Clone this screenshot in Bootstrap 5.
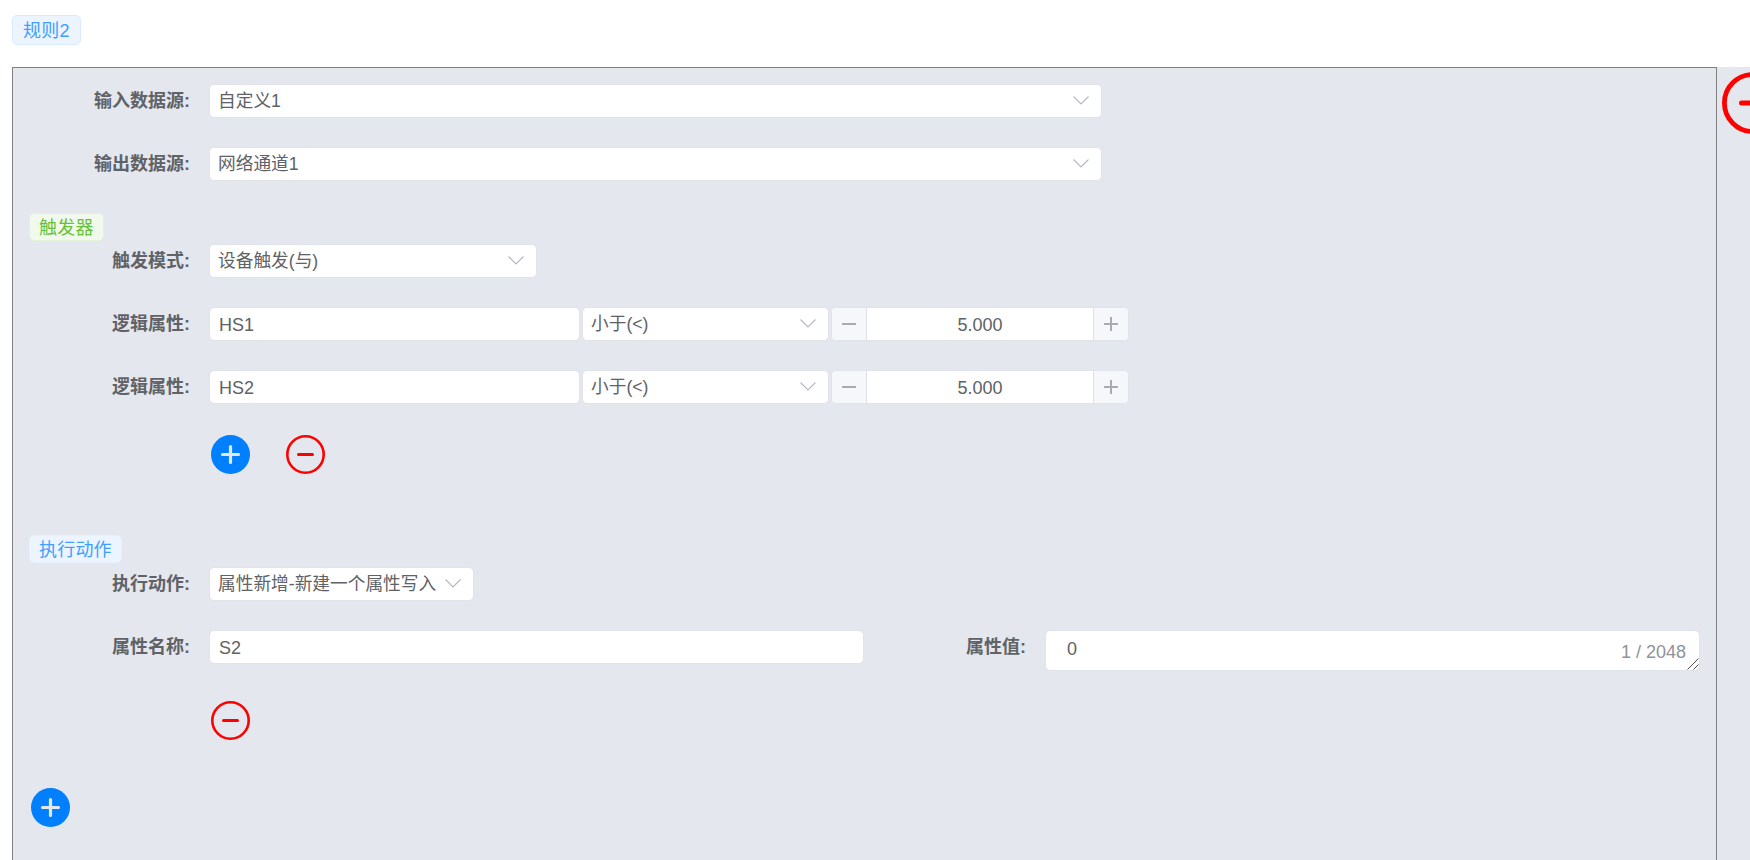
<!DOCTYPE html>
<html lang="zh"><head><meta charset="utf-8"><title>规则2</title>
<link rel="stylesheet" href="https://cdn.jsdelivr.net/npm/bootstrap@5.3.0/dist/css/bootstrap.min.css">
<style>
html,body{height:860px;overflow:hidden;background:#fff}
body{font-family:"Liberation Sans","Noto Sans CJK SC",sans-serif;font-size:18px;color:#606266}
.rule-tag{display:inline-flex;align-items:center;height:30px;padding:1px 9px 0;border:1px solid #d9ecff;border-radius:5px;background:#ecf5ff;color:#409eff;line-height:1;letter-spacing:.2px}
.rule-tag.top-tag{padding:1px 10px 0}
.rule-tag.small-tag{height:28px;border-color:#e6f1fd}
.rule-tag.green{background:#f0f9eb;border-color:#e1f3d8;color:#67c23a}
.head-gap{padding:15px 0 22px 12px}
.band{margin-left:12px;background:#e4e7ee;height:793px;overflow:hidden}
.panel{width:1705px;flex:none;border:1px solid #808080;border-bottom:0;padding:16px 16px 0 0;height:793px}
.fld{display:flex;align-items:center;min-height:34px}
.pitch{margin-bottom:29px}
.lbl{width:196px;flex:none;text-align:right;padding-right:19px;font-weight:700;margin:0;white-space:nowrap;color:#606266}
.lbl2{width:181px;line-height:34px}
.form-control,.form-select{height:34px;min-height:34px;font-size:18px;color:#606266;border:1px solid #e0e3e9;border-radius:5px;padding:2px 9px 0;box-shadow:none;line-height:1.2;font-family:inherit}
.form-select{font-size:17.7px;padding:2px 24px 0 8px;background-size:16px 9px;background-position:right 12px top 11px;background-image:url("data:image/svg+xml,%3Csvg xmlns='http://www.w3.org/2000/svg' viewBox='0 0 16 9'%3E%3Cpath d='M.5.5 8 8 15.5.5' fill='none' stroke='%23b4b7be' stroke-width='1.1'/%3E%3C/svg%3E")}
.w-wide{width:893px}.w-trig{width:328px}.w-act{width:265px}.w-name{width:371px}.w-op{width:247px}.w-attr{width:655px}
.gap-2px{gap:2px}
.num-box{width:298px;flex:none;display:flex;height:34px;border:1px solid #e0e3e9;border-radius:5px;overflow:hidden;background:#fff}
.num-box button{width:35px;flex:none;border:0;background:#f5f7fa;padding:0;display:flex;align-items:center;justify-content:center}
.num-box button:first-child{border-right:1px solid #dcdfe6}
.num-box button:last-child{border-left:1px solid #dcdfe6}
.num-box input{flex:1;min-width:0;border:0;text-align:center;color:#606266;font-size:18px;font-family:inherit;outline:0;padding:2px 0 0}
.rnd{width:39px;height:39px;display:block;flex:none}
.btn-rows{padding-left:198px;gap:36px}
.area-wrap{position:relative;width:655px;flex:none}
.area-wrap textarea{height:41px;min-height:41px;width:100%;padding:8px 21px 0;display:block;resize:none}
.count{position:absolute;right:14px;bottom:7px;font-size:18px;color:#909399;line-height:1.2}
.grip{position:absolute;right:1px;bottom:1px;width:12px;height:12px;display:block;pointer-events:none}
.big-rnd{width:62px;height:62px;display:block;flex:none;margin:5px 0 0 5px}
.ps-tag1{padding:32px 0 3px 16px;line-height:0}
.ps-tag2{padding:61px 0 4px 16px;line-height:0}
.btns1{margin-top:31px}
.btns2{margin-top:30px}
.btns3{margin-top:48px;padding-left:18px}
</style></head><body>
<div class="head-gap"><span class="rule-tag top-tag">规则2</span></div>
<div class="band d-flex">
<section class="panel">
 <div class="fld pitch"><label class="lbl">输入数据源:</label><select class="form-select w-wide"><option>自定义1</option></select></div>
 <div class="fld"><label class="lbl">输出数据源:</label><select class="form-select w-wide"><option>网络通道1</option></select></div>
 <div class="ps-tag1"><span class="rule-tag small-tag green">触发器</span></div>
 <div class="fld pitch"><label class="lbl">触发模式:</label><select class="form-select w-trig"><option>设备触发(与)</option></select></div>
 <div class="fld pitch"><label class="lbl">逻辑属性:</label><div class="d-flex gap-2px"><input class="form-control w-name" value="HS1"><select class="form-select w-op"><option>小于(&lt;)</option></select><div class="num-box"><button type="button" aria-label="减"><svg width="14" height="14" viewBox="0 0 14 14"><path d="M0 7h14" stroke="#a8abb2" stroke-width="2"/></svg></button><input value="5.000"><button type="button" aria-label="加"><svg width="14" height="14" viewBox="0 0 14 14"><path d="M0 7h14M7 0v14" stroke="#a8abb2" stroke-width="2"/></svg></button></div></div></div>
 <div class="fld"><label class="lbl">逻辑属性:</label><div class="d-flex gap-2px"><input class="form-control w-name" value="HS2"><select class="form-select w-op"><option>小于(&lt;)</option></select><div class="num-box"><button type="button" aria-label="减"><svg width="14" height="14" viewBox="0 0 14 14"><path d="M0 7h14" stroke="#a8abb2" stroke-width="2"/></svg></button><input value="5.000"><button type="button" aria-label="加"><svg width="14" height="14" viewBox="0 0 14 14"><path d="M0 7h14M7 0v14" stroke="#a8abb2" stroke-width="2"/></svg></button></div></div></div>
 <div class="d-flex btn-rows btns1">
  <svg class="rnd" viewBox="0 0 39 39"><circle cx="19.5" cy="19.5" r="19.5" fill="#007fff"/><path d="M11.5 19.5h16M19.5 11.5v16" stroke="#e4e7ee" stroke-width="3.2" stroke-linecap="round"/></svg>
  <svg class="rnd" viewBox="0 0 39 39"><circle cx="19.5" cy="19.5" r="18.2" fill="none" stroke="#f00" stroke-width="2.6"/><path d="M12.5 19.5h14" stroke="#f00" stroke-width="3" stroke-linecap="round"/></svg>
 </div>
 <div class="ps-tag2"><span class="rule-tag small-tag">执行动作</span></div>
 <div class="fld pitch"><label class="lbl">执行动作:</label><select class="form-select w-act"><option>属性新增-新建一个属性写入</option></select></div>
 <div class="d-flex align-items-start">
  <div class="fld"><label class="lbl">属性名称:</label><input class="form-control w-attr" value="S2"></div>
  <label class="lbl lbl2">属性值:</label>
  <div class="area-wrap"><textarea class="form-control">0</textarea><span class="count">1 / 2048</span>
   <svg class="grip" viewBox="0 0 12 12"><path d="M.5 11.5 11.5.5M6.5 11.5l5-5" stroke="#4a4a4a" stroke-width="1" fill="none"/></svg></div>
 </div>
 <div class="btn-rows d-flex btns2">
  <svg class="rnd" viewBox="0 0 39 39"><circle cx="19.5" cy="19.5" r="18.2" fill="none" stroke="#f00" stroke-width="2.6"/><path d="M12.5 19.5h14" stroke="#f00" stroke-width="3" stroke-linecap="round"/></svg>
 </div>
 <div class="btns3">
  <svg class="rnd" viewBox="0 0 39 39"><circle cx="19.5" cy="19.5" r="19.5" fill="#007fff"/><path d="M11.5 19.5h16M19.5 11.5v16" stroke="#e4e7ee" stroke-width="3.2" stroke-linecap="round"/></svg>
 </div>
</section>
<svg class="big-rnd" viewBox="0 0 62 62"><circle cx="31" cy="31" r="28.6" fill="none" stroke="#f00" stroke-width="4.8"/><path d="M19.5 31h24" stroke="#f00" stroke-width="5" stroke-linecap="round"/></svg>
</div>
</body></html>
